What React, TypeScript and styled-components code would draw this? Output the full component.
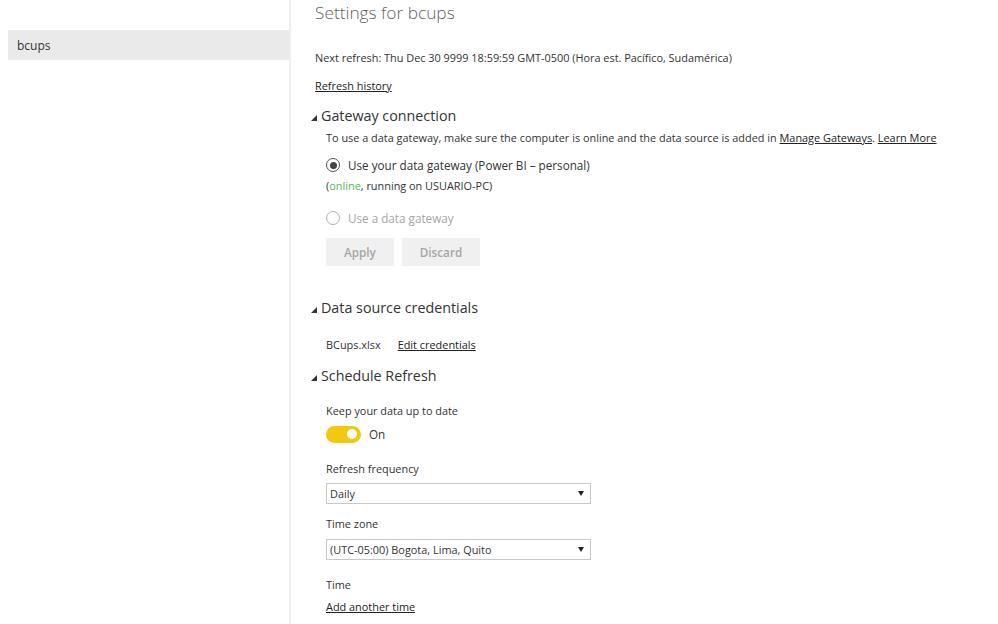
import styled, { createGlobalStyle } from 'styled-components';

const GlobalStyle = createGlobalStyle`
  html, body {
    margin: 0;
    padding: 0;
    background: #fff;
  }
  body {
    font-family: 'Open Sans', 'Noto Sans', sans-serif;
    color: #333;
  }
`;

function Radio({ checked, label, disabled }: { checked?: boolean; label: string; disabled?: boolean }) {
  return (
    <RadioRow $disabled={disabled}>
      <RadioCircle $checked={checked} $disabled={disabled} />
      <span>{label}</span>
    </RadioRow>
  );
}

function Select({ value }: { value: string }) {
  return (
    <SelectBox>
      <span>{value}</span>
      <svg width="6" height="5" viewBox="0 0 6 5">
        <path d="M0 0 L6 0 L3 5 Z" fill="#222" />
      </svg>
    </SelectBox>
  );
}

export default function App() {
  return (
    <>
      <GlobalStyle />
      <Page>
        <Sidebar>
          <NavItem>bcups</NavItem>
        </Sidebar>
        <Main>
          <Title>Settings for bcups</Title>
          <Text $mt={24}>Next refresh: Thu Dec 30 9999 18:59:59 GMT-0500 (Hora est. Pacífico, Sudamérica)</Text>
          <LinkText $mt={12}>Refresh history</LinkText>

          <SectionHeading $mt={11}>Gateway connection</SectionHeading>
          <Indented>
            <Text $mt={3}>
              To use a data gateway, make sure the computer is online and the data source is added in{' '}
              <Underline>Manage Gateways</Underline>. <Underline>Learn More</Underline>
            </Text>
            <Spacer $h={10} />
            <Radio checked label="Use your data gateway (Power BI – personal)" />
            <Text $mt={4}>
              (<Online>online</Online>, running on USUARIO-PC)
            </Text>
            <Spacer $h={15} />
            <Radio disabled label="Use a data gateway" />
            <ButtonRow>
              <Button>Apply</Button>
              <Button>Discard</Button>
            </ButtonRow>
          </Indented>

          <SectionHeading $mt={31}>Data source credentials</SectionHeading>
          <Indented>
            <CredRow>
              <span>BCups.xlsx</span>
              <Underline>Edit credentials</Underline>
            </CredRow>
          </Indented>

          <SectionHeading $mt={12}>Schedule Refresh</SectionHeading>
          <Indented>
            <Text $mt={16}>Keep your data up to date</Text>
            <ToggleRow>
              <Toggle>
                <Knob />
              </Toggle>
              <span>On</span>
            </ToggleRow>
            <Text $mt={18}>Refresh frequency</Text>
            <Spacer $h={6} />
            <Select value="Daily" />
            <Text $mt={12}>Time zone</Text>
            <Spacer $h={7} />
            <Select value="(UTC-05:00) Bogota, Lima, Quito" />
            <Text $mt={17}>Time</Text>
            <LinkText $mt={6}>Add another time</LinkText>
          </Indented>
        </Main>
      </Page>
    </>
  );
}

const Page = styled.div`
  display: flex;
  min-height: 624px;
`;

const Sidebar = styled.div`
  width: 281px;
  padding-left: 8px;
  padding-top: 30px;
  border-right: 2px solid #efefef;
  flex-shrink: 0;
`;

const NavItem = styled.div`
  height: 30px;
  line-height: 31px;
  background: #eaeaea;
  padding-left: 9px;
  font-size: 12px;
  color: #333;
`;

const Main = styled.div`
  flex: 1;
  padding-left: 24px;
`;

const Title = styled.h1`
  margin: 0;
  font-size: 17.3px;
  font-weight: 300;
  line-height: 26px;
  color: #5f5f5f;
`;

const Text = styled.div<{ $mt: number }>`
  margin-top: ${(p) => p.$mt}px;
  font-size: 10.9px;
  line-height: 16px;
  color: #333;
  white-space: nowrap;
`;

const LinkText = styled(Text)`
  text-decoration: underline;
  color: #222;
`;

const Underline = styled.span`
  text-decoration: underline;
  color: #222;
`;

const Online = styled.span`
  color: #5cb85c;
`;

const SectionHeading = styled.h2<{ $mt: number }>`
  margin: ${(p) => p.$mt}px 0 0 -4px;
  display: flex;
  align-items: center;
  gap: 4px;
  font-size: 14.3px;
  font-weight: 400;
  line-height: 22px;
  color: #333;

  &::before {
    content: '';
    width: 0;
    height: 0;
    margin-top: 3px;
    border-left: 6px solid transparent;
    border-bottom: 6px solid #333;
  }
`;

const Indented = styled.div`
  padding-left: 11px;
`;

const Spacer = styled.div<{ $h: number }>`
  height: ${(p) => p.$h}px;
`;

const RadioRow = styled.div<{ $disabled?: boolean }>`
  display: flex;
  align-items: center;
  gap: 8px;
  height: 18px;
  font-size: 11.7px;
  color: ${(p) => (p.$disabled ? '#a6a6a6' : '#333')};
`;

const RadioCircle = styled.span<{ $checked?: boolean; $disabled?: boolean }>`
  box-sizing: border-box;
  width: 14px;
  height: 14px;
  border-radius: 50%;
  border: 1.5px solid ${(p) => (p.$disabled ? '#b0b0b0' : '#555')};
  display: flex;
  align-items: center;
  justify-content: center;

  &::after {
    content: '';
    width: 7px;
    height: 7px;
    border-radius: 50%;
    background: ${(p) => (p.$checked ? '#444' : 'transparent')};
  }
`;

const ButtonRow = styled.div`
  display: flex;
  gap: 8px;
  margin-top: 11px;
`;

const Button = styled.button`
  height: 28px;
  padding: 0 18px;
  border: none;
  background: #f0f0f0;
  color: #a6a6a6;
  font-family: 'Open Sans', 'Noto Sans', sans-serif;
  font-size: 11.7px;
  font-weight: 600;
  cursor: default;
`;

const CredRow = styled.div`
  display: flex;
  gap: 17px;
  margin-top: 18px;
  font-size: 10.9px;
  line-height: 16px;
  color: #333;
`;

const ToggleRow = styled.div`
  display: flex;
  align-items: center;
  gap: 8px;
  margin-top: 6px;
  height: 18px;
  font-size: 11.7px;
  color: #333;
`;

const Toggle = styled.div`
  box-sizing: border-box;
  width: 35px;
  height: 17px;
  border-radius: 9px;
  background: #f2c811;
  display: flex;
  align-items: center;
  justify-content: flex-end;
  padding-right: 4px;
`;

const Knob = styled.div`
  width: 10px;
  height: 10px;
  border-radius: 50%;
  background: #fff;
`;

const SelectBox = styled.div`
  box-sizing: border-box;
  width: 265px;
  height: 21px;
  border: 1px solid #c8c8c8;
  display: flex;
  align-items: center;
  justify-content: space-between;
  padding: 0 6px 0 3px;
  font-size: 10.9px;
  color: #333;
`;
